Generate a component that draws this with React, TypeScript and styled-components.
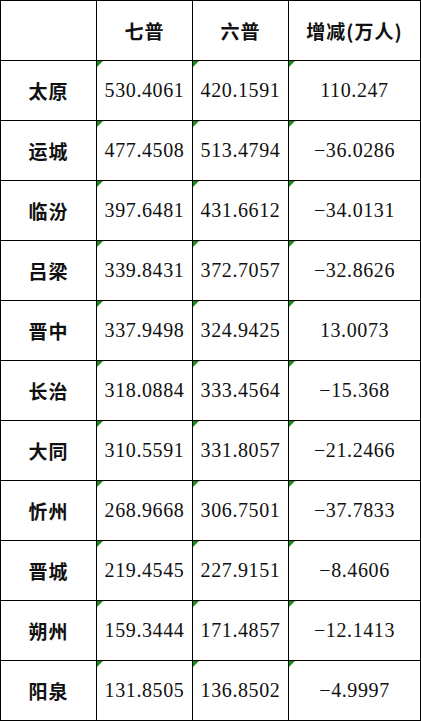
import React from "react";
import styled, { createGlobalStyle } from "styled-components";

const Global = createGlobalStyle`
  html, body {
    margin: 0;
    padding: 0;
    background: #fff;
  }
`;

const Sheet = styled.div`
  display: grid;
  grid-template-columns: 96px 96px 96px 132px;
  grid-auto-rows: 60px;
  width: 421px;
  border-left: 1px solid #000;
  border-top: 1px solid #000;
  box-sizing: border-box;
  color: #111;
`;

const Cell = styled.div<{ $head?: boolean; $flag?: boolean }>`
  position: relative;
  display: flex;
  align-items: center;
  justify-content: center;
  border-right: 1px solid #000;
  border-bottom: 1px solid #000;
  font-family: ${(p) =>
    p.$head
      ? '"Noto Sans CJK SC", sans-serif'
      : '"Liberation Serif", "Noto Sans CJK SC", serif'};
  font-weight: ${(p) => (p.$head ? 700 : 400)};
  font-size: ${(p) => (p.$head ? "19px" : "20px")};
  letter-spacing: ${(p) => (p.$head ? "1px" : "0.6px")};
  white-space: nowrap;
  // 绿色小三角 (Excel 提示)
  &::before {
    content: "";
    display: ${(p) => (p.$flag ? "block" : "none")};
    position: absolute;
    top: 0;
    left: 0;
    width: 0;
    height: 0;
    border-top: 6px solid #1a8a1a;
    border-right: 6px solid transparent;
  }
`;

const rows: [string, string, string, string][] = [
  ["太原", "530.4061", "420.1591", "110.247"],
  ["运城", "477.4508", "513.4794", "−36.0286"],
  ["临汾", "397.6481", "431.6612", "−34.0131"],
  ["吕梁", "339.8431", "372.7057", "−32.8626"],
  ["晋中", "337.9498", "324.9425", "13.0073"],
  ["长治", "318.0884", "333.4564", "−15.368"],
  ["大同", "310.5591", "331.8057", "−21.2466"],
  ["忻州", "268.9668", "306.7501", "−37.7833"],
  ["晋城", "219.4545", "227.9151", "−8.4606"],
  ["朔州", "159.3444", "171.4857", "−12.1413"],
  ["阳泉", "131.8505", "136.8502", "−4.9997"],
];

export default function App() {
  return (
    <>
      <Global />
      <Sheet>
        <Cell $head />
        <Cell $head>七普</Cell>
        <Cell $head>六普</Cell>
        <Cell $head>增减(万人)</Cell>
        {rows.map(([city, seven, six, diff]) => (
          <React.Fragment key={city}>
            <Cell $head>{city}</Cell>
            <Cell $flag>{seven}</Cell>
            <Cell $flag>{six}</Cell>
            <Cell $flag>{diff}</Cell>
          </React.Fragment>
        ))}
      </Sheet>
    </>
  );
}
